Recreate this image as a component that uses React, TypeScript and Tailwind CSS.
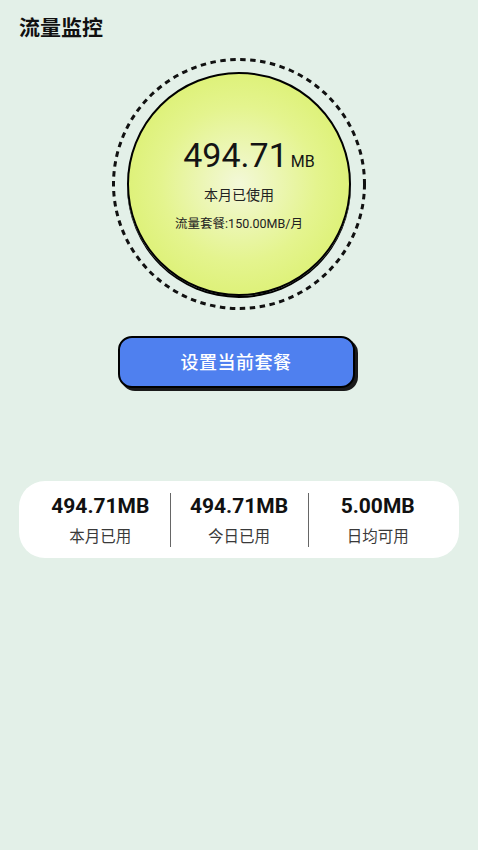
const stats = [
  { value: "494.71MB", label: "本月已用" },
  { value: "494.71MB", label: "今日已用" },
  { value: "5.00MB", label: "日均可用" },
];

const App = () => {
  return (
    <div className="min-h-[850px] w-full bg-[#e3f0e8] font-['Roboto','Noto_Sans_CJK_SC',sans-serif] text-[#111]">
      <div className="px-[19px] pt-[14px]">
        <h1 className="text-[21px] font-bold leading-[28px]">流量监控</h1>
      </div>

      <div className="mt-[16px] flex justify-center">
        <div className="relative flex h-[252px] w-[254px] items-center justify-center">
          <svg className="absolute inset-0" width="254" height="252" viewBox="0 0 254 252">
            <ellipse
              cx="127"
              cy="126"
              rx="125.5"
              ry="124.5"
              fill="none"
              stroke="#111"
              strokeWidth="3"
              strokeDasharray="5.5 4.5"
            />
          </svg>
          <div className="relative flex h-[224px] w-[224px] flex-col items-center justify-center rounded-full border-2 border-black bg-[radial-gradient(circle,#f3f8d8_0%,#e4f48e_50%,#d6ee5e_100%)] shadow-[0_2px_0_#000]">
            <div className="flex items-baseline pl-[20px]">
              <span className="text-[34px] leading-[40px] text-[#141414]">494.71</span>
              <span className="ml-[3px] text-[16px] text-[#141414]">MB</span>
            </div>
            <div className="mt-[10px] text-[14px] leading-[20px] text-[#222]">本月已使用</div>
            <div className="mt-[10px] text-[12.5px] leading-[18px] text-[#222]">流量套餐:150.00MB/月</div>
          </div>
        </div>
      </div>

      <div className="mt-[26px] flex justify-center">
        <button className="mr-[6px] h-[52px] w-[237px] rounded-[14px] border-2 border-black bg-[#4f80ef] text-[18px] font-medium tracking-[0.5px] text-white shadow-[3px_3px_0_#1a1a1a]">
          设置当前套餐
        </button>
      </div>

      <div className="mx-[19px] mt-[93px] flex h-[77px] items-center rounded-[26px] bg-white px-[12px]">
        {stats.map((s, i) => (
          <div key={i} className="relative flex flex-1 flex-col items-center">
            {i > 0 && <div className="absolute left-0 top-1/2 h-[54px] w-px -translate-y-1/2 bg-[#666]" />}
            <div className="text-[21px] font-bold leading-[26px] text-[#111]">{s.value}</div>
            <div className="mt-[8px] text-[15.5px] leading-[20px] text-[#3a3a3a]">{s.label}</div>
          </div>
        ))}
      </div>
    </div>
  );
};

export default App;
